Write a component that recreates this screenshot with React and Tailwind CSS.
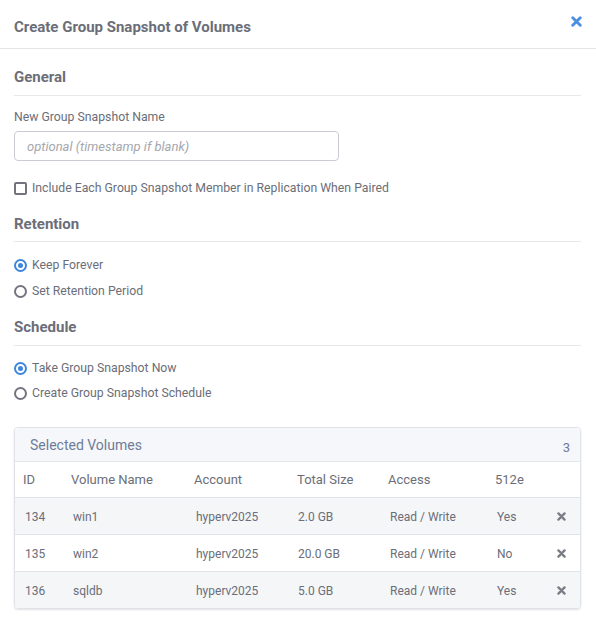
import React from 'react';

const VOLUMES = [
    { id: 134, name: 'win1', account: 'hyperv2025', size: '2.0 GB', access: 'Read / Write', e512: 'Yes' },
    { id: 135, name: 'win2', account: 'hyperv2025', size: '20.0 GB', access: 'Read / Write', e512: 'No' },
    { id: 136, name: 'sqldb', account: 'hyperv2025', size: '5.0 GB', access: 'Read / Write', e512: 'Yes' },
];

function XIcon({ className }) {
    return (
        <svg viewBox="0 0 10 10" className={className} fill="none" stroke="currentColor" strokeWidth="2.6" strokeLinecap="round">
            <path d="M1.6 1.6 L8.4 8.4 M8.4 1.6 L1.6 8.4" />
        </svg>
    );
}

function Radio({ checked, label }) {
    return (
        <label className="flex items-center gap-[5px] h-[16px] text-[12.25px] text-[#6b6e78]">
            <span
                className={`w-[13px] h-[13px] rounded-full border-2 flex items-center justify-center ${
                    checked ? 'border-[#3d86dc]' : 'border-[#74737f]'
                }`}
            >
                {checked && <span className="w-[5px] h-[5px] rounded-full bg-[#3d86dc]" />}
            </span>
            {label}
        </label>
    );
}

function SectionTitle({ children, className = '' }) {
    return (
        <div className={`border-b border-[#e6e8ec] pb-[8px] text-[15px] leading-[18px] font-bold text-[#6b6e78] ${className}`}>
            {children}
        </div>
    );
}

export default function App() {
    return (
        <div className="w-[596px] h-[627px] bg-white font-['Roboto',sans-serif]">
            <div className="relative border-b border-[#e3e5e9] pt-[18px] pb-[12px] px-[14px]">
                <h2 className="text-[15px] leading-[18px] font-bold text-[#6b6e78]">Create Group Snapshot of Volumes</h2>
                <button className="absolute right-[14px] top-[16px] text-[#4a8fe2]">
                    <XIcon className="w-[11px] h-[11px]" />
                </button>
            </div>

            <div className="px-[14px] pr-[15px]">
                <SectionTitle className="mt-[19px] pb-[9px]">General</SectionTitle>

                <div className="mt-[13px] text-[12.25px] leading-[16px] text-[#6b6e78]">New Group Snapshot Name</div>
                <input
                    className="mt-[6px] w-[325px] h-[30px] rounded-[4px] border border-[#c9ccd2] px-[12px] text-[13px] italic placeholder:text-[#a5a7ae] outline-none"
                    placeholder="optional (timestamp if blank)"
                />

                <label className="mt-[19px] flex items-center gap-[5px] h-[16px] text-[12.25px] text-[#6b6e78]">
                    <span className="w-[13px] h-[13px] rounded-[2px] border-2 border-[#74737f]" />
                    Include Each Group Snapshot Member in Replication When Paired
                </label>

                <SectionTitle className="mt-[19px]">Retention</SectionTitle>
                <div className="mt-[15px] flex flex-col gap-[10px]">
                    <Radio checked label="Keep Forever" />
                    <Radio label="Set Retention Period" />
                </div>

                <SectionTitle className="mt-[19px] pb-[9px]">Schedule</SectionTitle>
                <div className="mt-[14px] flex flex-col gap-[9px]">
                    <Radio checked label="Take Group Snapshot Now" />
                    <Radio label="Create Group Snapshot Schedule" />
                </div>

                <div className="mt-[26px] border border-[#dfe2e7] rounded-[4px] shadow-[0_1px_2px_rgba(0,0,0,0.12)] overflow-hidden">
                    <div className="h-[34px] bg-[#f5f7fa] border-b border-[#e4e7ec] flex items-start justify-between px-[15px]">
                        <span className="mt-[8px] text-[14px] leading-[18px] text-[#6f7b99]">Selected Volumes</span>
                        <span className="mt-[12px] text-[13px] leading-[16px] text-[#6f7b99] mr-[-5px]">3</span>
                    </div>
                    <table className="w-full border-collapse text-left">
                        <thead>
                            <tr className="h-[35px] border-b border-[#e1e4e9] text-[13px] text-[#6b6e78]">
                                <th className="font-normal pl-[8px] w-[56px]">ID</th>
                                <th className="font-normal w-[123px]">Volume Name</th>
                                <th className="font-normal w-[103px]">Account</th>
                                <th className="font-normal w-[91px]">Total Size</th>
                                <th className="font-normal w-[107px]">Access</th>
                                <th className="font-normal">512e</th>
                                <th className="w-[38px]" />
                            </tr>
                        </thead>
                        <tbody>
                            {VOLUMES.map((v, i) => (
                                <tr
                                    key={v.id}
                                    className={`h-[37px] text-[12px] text-[#6b6e78] ${i % 2 === 0 ? 'bg-[#f5f6f8]' : 'bg-white'} ${
                                        i < VOLUMES.length - 1 ? 'border-b border-[#e1e4e9]' : ''
                                    }`}
                                >
                                    <td className="pl-[10px] pt-[2px]">{v.id}</td>
                                    <td className="pl-[2px] pt-[2px]">{v.name}</td>
                                    <td className="pl-[2px] pt-[2px]">{v.account}</td>
                                    <td className="pl-[1px] pt-[2px]">{v.size}</td>
                                    <td className="pl-[2px] pt-[2px]">{v.access}</td>
                                    <td className="pl-[2px] pt-[2px]">{v.e512}</td>
                                    <td className="pt-[2px] pl-[15px]">
                                        <XIcon className="w-[9px] h-[9px] text-[#7a7d86]" />
                                    </td>
                                </tr>
                            ))}
                        </tbody>
                    </table>
                </div>
            </div>
        </div>
    );
}
